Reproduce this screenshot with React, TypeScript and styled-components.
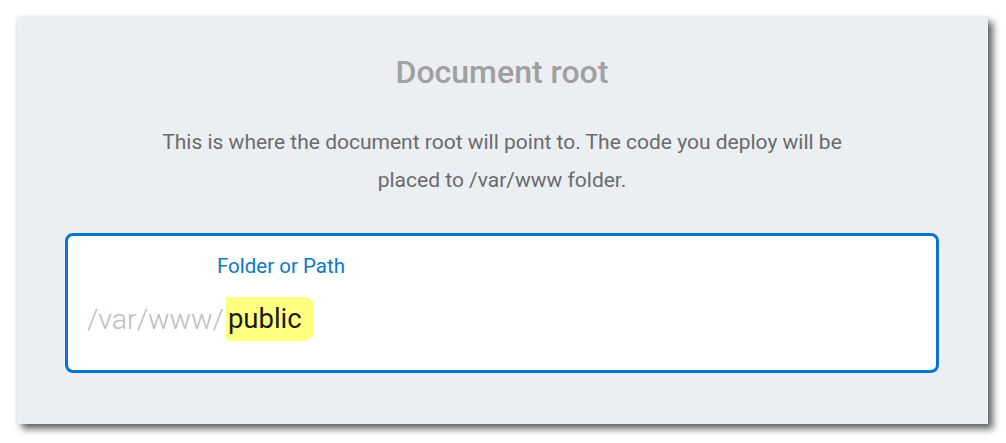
import styled, { createGlobalStyle } from 'styled-components';

const GlobalStyles = createGlobalStyle`
  html, body {
    margin: 0;
    background: #ffffff;
    font-family: Roboto, "Liberation Sans", sans-serif;
  }
`;

const Page = styled.div`
  padding: 17px 18px 19px 17px;
`;

const Panel = styled.section`
  width: 971px;
  box-sizing: border-box;
  background-color: #ebeef3;
  padding: 36px 49px 51px 48px;
  display: flex;
  flex-direction: column;
  align-items: center;
  box-shadow: 5px 5px 7px rgba(0, 0, 0, 0.6), 0 0 4px rgba(0, 0, 0, 0.12);
`;

const Title = styled.h2`
  margin: 0;
  font-size: 32px;
  line-height: 38px;
  font-weight: 500;
  color: #a0a0a0;
`;

const Description = styled.p`
  margin: 32px 0 0;
  width: 700px;
  text-align: center;
  font-size: 21px;
  line-height: 38px;
  color: #6b6b6b;
`;

const Field = styled.div`
  margin-top: 34px;
  width: 100%;
  box-sizing: border-box;
  background: #ffffff;
  border: 3px solid #0a74c8;
  border-radius: 8px;
  padding: 18px 19px 29px;
  display: flex;
  flex-direction: column;
`;

const Label = styled.label`
  margin-left: 130px;
  font-size: 20.5px;
  line-height: 24px;
  color: #0b78c8;
`;

const ValueRow = styled.div`
  margin-top: 19px;
  display: flex;
  align-items: center;
  height: 44px;
`;

const Prefix = styled.span`
  font-size: 28.5px;
  color: #bdbdbd;
  font-weight: 300;
`;

const Highlight = styled.span`
  display: inline-block;
  font-size: 27.5px;
  line-height: 44px;
  padding: 0 12px 0 2px;
  margin-left: 2px;
  background: #ffff80;
  color: #1a1a1a;
  border-radius: 1px 10px 10px 4px;
`;

export default function App() {
  return (
    <>
      <GlobalStyles />
      <Page>
        <Panel>
          <Title>Document root</Title>
          <Description>
            This is where the document root will point to. The code you deploy will be placed to /var/www folder.
          </Description>
          <Field>
            <Label>Folder or Path</Label>
            <ValueRow>
              <Prefix>/var/www/</Prefix>
              <Highlight>public</Highlight>
            </ValueRow>
          </Field>
        </Panel>
      </Page>
    </>
  );
}
